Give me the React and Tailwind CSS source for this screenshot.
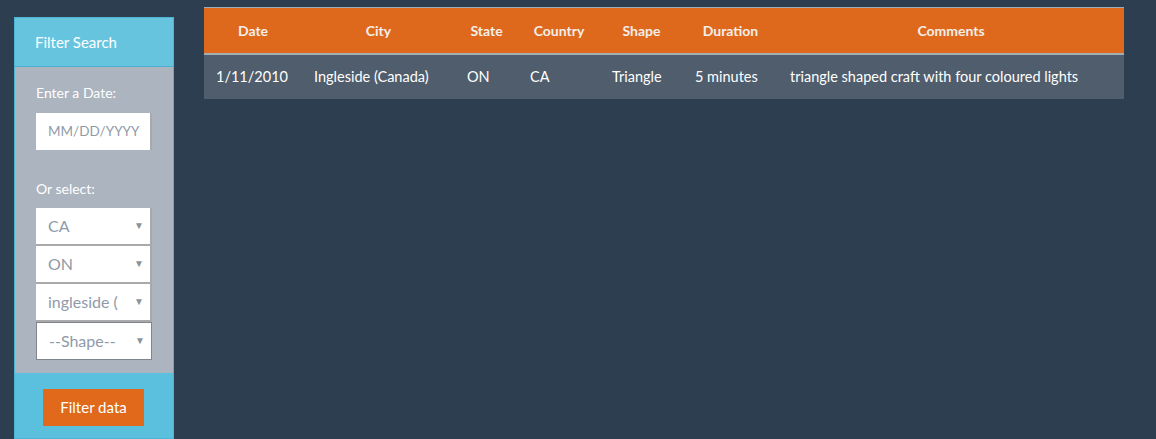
const rows = [
  {
    date: '1/11/2010',
    city: 'Ingleside (Canada)',
    state: 'ON',
    country: 'CA',
    shape: 'Triangle',
    duration: '5 minutes',
    comments: 'triangle shaped craft with four coloured lights',
  },
];

const columns = [
  { key: 'date', label: 'Date', w: 'w-[98px]' },
  { key: 'city', label: 'City', w: 'w-[153px]' },
  { key: 'state', label: 'State', w: 'w-[63px]' },
  { key: 'country', label: 'Country', w: 'w-[82px]' },
  { key: 'shape', label: 'Shape', w: 'w-[83px]' },
  { key: 'duration', label: 'Duration', w: 'w-[95px]' },
  { key: 'comments', label: 'Comments', w: 'w-[346px]' },
];

function FakeSelect({ value, last }) {
  return (
    <div
      className={
        'relative h-[38px] w-[116px] bg-white flex items-center pl-[12px] text-[16px] text-[#8f9aa8] ' +
        (last ? 'h-[37px] border border-[#7f858c]' : 'border-r-2 border-b-2 border-[#a9a9a9]')
      }
    >
      <span className="block w-[70px] overflow-hidden whitespace-nowrap">{value}</span>
      <span className="absolute right-[6px] top-[10px] text-[10px] text-[#8a939c]">▼</span>
    </div>
  );
}

export default function App() {
  return (
    <div className="min-h-[439px] bg-[#2c3e50] flex items-start gap-[30px] pl-[14px] font-['Lato',sans-serif]">
      <div className="mt-[17px] w-[160px] h-[422px] border border-[#4bb5d6] flex flex-col">
        <div className="h-[49px] bg-[#66c4df] border-b border-[#4bb1cf] flex items-center pl-[20px] text-white text-[15px]">
          Filter Search
        </div>
        <div className="bg-[#abb4bf] h-[306px] pl-[21px] pt-[15px] text-white text-[14px]">
          <p>Enter a Date:</p>
          <div className="mt-[10px] h-[37px] w-[116px] bg-white border-r-2 border-[#a9a9a9] flex items-center pl-[12px] text-[13.5px] text-[#8f9aa8]">
            MM/DD/YYYY
          </div>
          <p className="mt-[28px]">Or select:</p>
          <div className="mt-[9px] flex flex-col">
            <FakeSelect value="CA" />
            <FakeSelect value="ON" />
            <FakeSelect value="ingleside (canada)" />
            <FakeSelect value="--Shape--" last />
          </div>
        </div>
        <div className="flex-1 bg-[#5bc0de] pt-[16px] pl-[28px]">
          <button className="h-[37px] w-[101px] bg-[#e0691c] text-white text-[15px]">Filter data</button>
        </div>
      </div>

      <table className="mt-[7px] w-[920px] table-fixed border-collapse text-[14px] text-white">
        <thead>
          <tr className="bg-[#de691d] border-t border-[#9eabb8] border-b-2 border-b-[#a4acb4]">
            {columns.map((c) => (
              <th key={c.key} className={c.w + ' h-[46px] text-center font-bold text-[#f4eee9]'}>
                {c.label}
              </th>
            ))}
          </tr>
        </thead>
        <tbody>
          {rows.map((r) => (
            <tr key={r.date} className="bg-[#4f5d6c]">
              {columns.map((c) => (
                <td key={c.key} className="h-[45px] pl-[12px] text-left whitespace-nowrap text-[14.5px]">
                  {r[c.key]}
                </td>
              ))}
            </tr>
          ))}
        </tbody>
      </table>
    </div>
  );
}
